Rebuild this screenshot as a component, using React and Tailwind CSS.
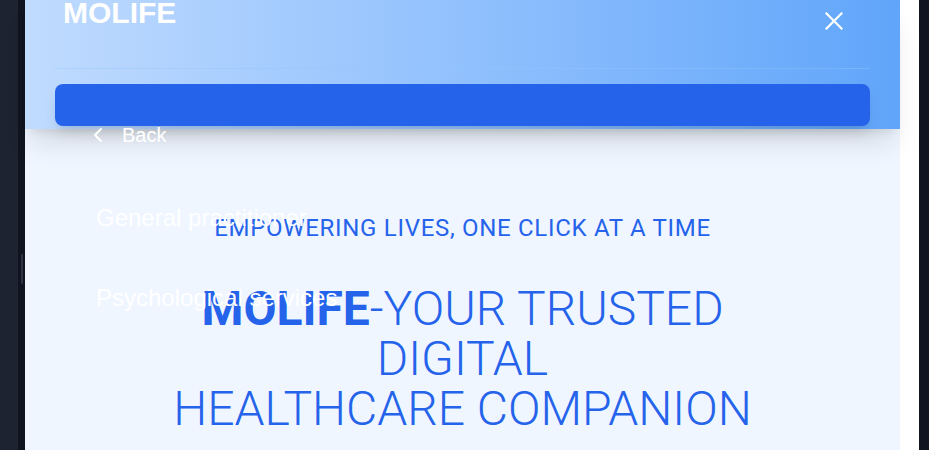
import { ChevronLeft } from "lucide-react";

function MenuOverlay() {
  return (
    <nav className="absolute left-[61px] top-[121px] z-20 flex flex-col text-white font-['Liberation_Sans',Arial,sans-serif]">
      <div className="flex h-[28px] items-center">
        <ChevronLeft size={24} strokeWidth={2} />
        <span className="ml-[12px] text-[20px] leading-[28px]">Back</span>
      </div>
      <a className="mt-[53px] pl-[10px] text-[24px] leading-[32px]">General practitioner</a>
      <a className="mt-[48px] pl-[10px] text-[24px] leading-[32px]">Psychological services</a>
    </nav>
  );
}

export default function App() {
  return (
    <div className="flex h-[450px] w-[929px] overflow-hidden bg-gray-900">
      <div className="w-[18px] bg-[#1e2331]" />
      <div className="relative w-[7px] bg-[#0f1420]">
        <div className="absolute left-[3px] top-[254px] h-[30px] w-[2px] rounded-full bg-[#2c3446]" />
      </div>

      <main className="relative flex-1 bg-[#eff6ff]">
        <header className="relative z-10 bg-gradient-to-r from-[#c0dbfe] to-[#60a5fa] px-[30px] pb-[3px] shadow-xl">
          <div className="flex h-[69px] items-start justify-between border-b border-[#93c5fd]/40">
            <h1 className="-mt-[5px] ml-[8px] font-['Liberation_Sans',Arial,sans-serif] text-[30px] font-bold leading-[36px] text-white">
              MOLIFE
            </h1>
            <button className="mr-[27px] mt-[12px] text-white">
              <svg width="18" height="18" viewBox="0 0 18 18" fill="none" stroke="currentColor" strokeWidth="2.2" strokeLinecap="square">
                <path d="M1.5 1.5 16.5 16.5M16.5 1.5 1.5 16.5" />
              </svg>
            </button>
          </div>
          <div className="mt-[15px] h-[42px] rounded-lg bg-[#2563eb] shadow-lg" />
        </header>

        <section className="pt-[83px] text-center font-['Roboto',sans-serif] text-[#2563eb]">
          <p className="text-[24px] leading-8 tracking-[0.7px]">EMPOWERING LIVES, ONE CLICK AT A TIME</p>
          <h2 className="mx-auto mt-[40px] max-w-[640px] text-[48px] font-light leading-[50px]">
            <span className="font-bold">MOLIFE</span>-YOUR TRUSTED DIGITAL
            <br />
            HEALTHCARE COMPANION
          </h2>
        </section>

        <MenuOverlay />
      </main>

      <div className="w-[19px] bg-white" />
      <div className="w-[10px] bg-[#0f1420]" />
    </div>
  );
}
